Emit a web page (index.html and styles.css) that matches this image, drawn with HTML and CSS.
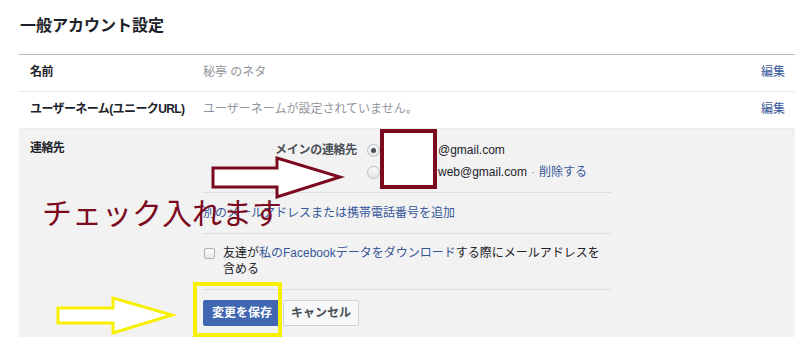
FILE: index.html
```html
<!DOCTYPE html>
<html>
  <head>
    <meta charset="utf-8" />
    <title>一般アカウント設定</title>
    <link rel="stylesheet" href="styles.css">
  </head>
  <body>
    <div class="page">
      <h2 class="title">一般アカウント設定</h2>

      <div class="settings">
        <div class="row">
          <div class="label">名前</div>
          <div class="value">秘亭 のネタ</div>
          <a class="edit" href="#">編集</a>
        </div>
        <div class="row">
          <div class="label">ユーザーネーム(ユニークURL)</div>
          <div class="value">ユーザーネームが設定されていません。</div>
          <a class="edit" href="#">編集</a>
        </div>

        <div class="row row-open">
          <div class="label">連絡先</div>
          <div class="open-body">
            <div class="contacts">
              <div class="contacts-label">メインの連絡先</div>
              <div class="contacts-list">
                <div class="contact">
                  <span class="radio checked"></span>
                  <span class="email">@gmail.com</span>
                </div>
                <div class="contact">
                  <span class="radio"></span>
                  <span class="email">web@gmail.com</span>
                  <span class="dot">·</span>
                  <a href="#">削除する</a>
                </div>
              </div>
            </div>

            <div class="add-row">
              <a href="#">別のメールアドレスまたは携帯電話番号を追加</a>
            </div>

            <div class="check-row">
              <span class="checkbox"></span>
              <span class="check-text">友達が<a href="#">私のFacebookデータをダウンロード</a>する際にメールアドレスを含める</span>
            </div>

            <div class="actions">
              <button class="btn btn-save">変更を保存</button>
              <button class="btn btn-cancel">キャンセル</button>
            </div>
          </div>
        </div>
      </div>

      <!-- 注釈 -->
      <svg class="marks" width="800" height="348" viewBox="0 0 800 348">
        <rect x="382" y="131" width="53" height="56" fill="#fff" stroke="#7b0a1e" stroke-width="4" />
        <polygon points="213,168 277,168 277,158 340,177 277,197 277,187 213,187"
          fill="#fff" stroke="#7b0a1e" stroke-width="3" stroke-linejoin="miter" />
        <rect x="195" y="284" width="85" height="51" fill="none" stroke="#f7f000" stroke-width="4" />
        <polygon points="58,308 113,308 113,298 172,315 113,333 113,323 58,323"
          fill="#fff" stroke="#f7f000" stroke-width="3" stroke-linejoin="miter" />
      </svg>
      <div class="note">チェック入れます</div>
    </div>
  </body>
</html>
```

FILE: styles.css
```css
body {
  margin: 0;
  background: #fff;
  font-family: "Liberation Sans", "Noto Sans CJK JP", sans-serif;
  font-size: 12px;
  color: #1d2129;
}

a {
  color: #365899;
  text-decoration: none;
}

.page {
  position: relative;
  width: 800px;
  height: 348px;
  overflow: hidden;
}

.title {
  margin: 0;
  padding: 16px 0 0 20px;
  font-size: 16px;
  line-height: 20px;
  font-weight: bold;
}

.settings {
  margin: 18px 5px 0 19px;
  border-top: 1px solid #bbb;
}

.row {
  display: flex;
  align-items: flex-start;
  padding: 9px 10px 11px 11px;
  line-height: 16px;
  border-bottom: 1px solid #e9ebee;
}

.label {
  width: 173px;
  flex: none;
  font-weight: bold;
  letter-spacing: -0.6px;
}

.value {
  flex: 1;
  color: #90949c;
}

.edit {
  flex: none;
}

/* 開いている行 */
.row-open {
  background: #f2f2f2;
  border-bottom: none;
  padding: 11px 0 11px 11px;
}

.open-body {
  width: 409px;
}

.contacts {
  display: flex;
  margin-top: -1px;
  padding-bottom: 9px;
  border-bottom: 1px solid #dddfe2;
}

.contacts-label {
  width: 154px;
  text-align: right;
  margin-right: 10px;
  font-weight: bold;
  color: #4b4f56;
  line-height: 22px;
  letter-spacing: -0.3px;
}

.contact {
  display: flex;
  align-items: center;
  height: 22px;
  font-size: 12px;
  color: #1d2129;
}

.email {
  margin-left: 58px;
}

.dot {
  color: #90949c;
  margin: 0 4px;
}

.radio {
  width: 11px;
  height: 11px;
  border: 1px solid #bcc0c4;
  border-radius: 50%;
  background: linear-gradient(#fafafa, #e4e5e7);
  position: relative;
  flex: none;
}

.radio.checked::after {
  content: "";
  position: absolute;
  left: 3px;
  top: 3px;
  width: 5px;
  height: 5px;
  border-radius: 50%;
  background: #4b4f56;
}

.add-row {
  padding: 12px 0;
  border-bottom: 1px solid #dddfe2;
}

.check-row {
  display: flex;
  align-items: flex-start;
  padding: 11px 0 12px;
  border-bottom: 1px solid #dddfe2;
}

.checkbox {
  flex: none;
  width: 9px;
  height: 9px;
  margin: 3px 8px 0 1px;
  border: 1px solid #aeb2b7;
  border-radius: 2px;
  background: linear-gradient(#fdfdfd, #e6e7e9);
}

.check-text {
  width: 384px;
}

.actions {
  display: flex;
  gap: 2px;
  padding-top: 10px;
}

.btn {
  height: 26px;
  padding: 0 7px;
  font-family: inherit;
  font-size: 12px;
  font-weight: bold;
  border-radius: 2px;
  border: 1px solid;
  line-height: 22px;
}

.btn-save {
  background: #4267b2;
  border-color: #4267b2;
  color: #fff;
  padding: 0 8px;
}

.btn-cancel {
  background: #f6f7f9;
  border-color: #ced0d4;
  color: #4b4f56;
}

/* 注釈レイヤー */
.marks {
  position: absolute;
  left: 0;
  top: 0;
  pointer-events: none;
}

.note {
  position: absolute;
  left: 42px;
  top: 193px;
  font-family: "Noto Sans CJK JP", sans-serif;
  font-size: 30px;
  line-height: 36px;
  color: #7b0a1e;
}
```
